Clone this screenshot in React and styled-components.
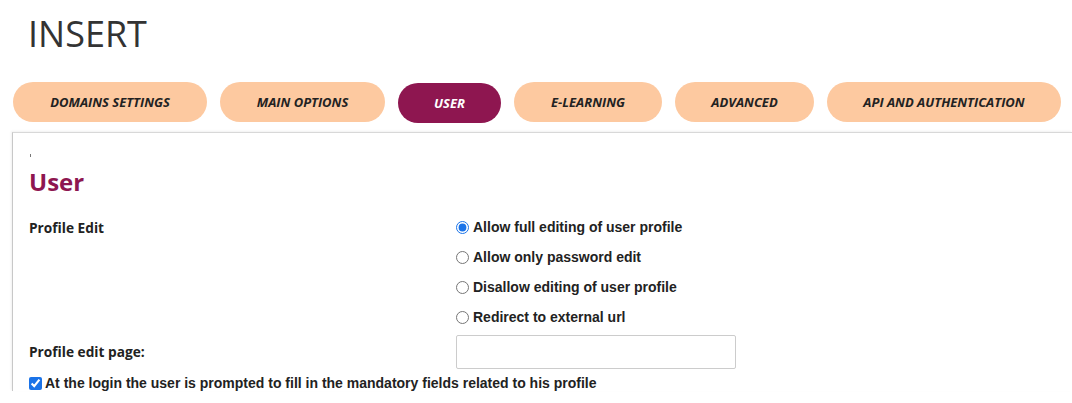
import React from "react";
import styled, { createGlobalStyle } from "styled-components";

const GlobalStyle = createGlobalStyle`
  body {
    margin: 0;
    background: #ffffff;
    font-family: "Open Sans", "Liberation Sans", sans-serif;
  }
`;

const Page = styled.div`
  width: 1072px;
  height: 403px;
  overflow: hidden;
  padding-left: 12px;
  box-sizing: border-box;
`;

const Title = styled.h1`
  margin: 0;
  padding: 12px 0 0 16px;
  height: 82px;
  box-sizing: border-box;
  font-family: "Open Sans", sans-serif;
  font-weight: 400;
  font-size: 36px;
  line-height: 44px;
  color: #333333;
`;

const Tabs = styled.div`
  display: flex;
  gap: 13px;
  padding-left: 1px;
  height: 50px;
`;

const Tab = styled.div`
  width: ${(p) => p.w}px;
  height: 40px;
  margin-top: ${(p) => (p.active ? 1 : 0)}px;
  border-radius: 20px;
  background: ${(p) => (p.active ? "#8e1650" : "#fdc9a0")};
  color: ${(p) => (p.active ? "#ffffff" : "#222222")};
  display: flex;
  align-items: center;
  justify-content: center;
  font-family: "Open Sans", sans-serif;
  font-size: 13px;
  font-weight: 700;
  font-style: italic;
  text-transform: uppercase;
`;

const Panel = styled.div`
  border-top: 1px solid #d8d8d8;
  border-left: 1px solid #c8c8c8;
  box-shadow: -1px -1px 2px rgba(0, 0, 0, 0.06);
  padding: 21px 16px 0 16px;
`;

const Dot = styled.div`
  width: 1px;
  height: 3px;
  margin-left: 1px;
  background: #777777;
`;

const Heading = styled.h2`
  margin: 8px 0 0 0;
  font-family: "Open Sans", sans-serif;
  font-size: 24px;
  font-weight: 700;
  line-height: 34px;
  color: #8e1650;
`;

const FormRow = styled.div`
  display: grid;
  grid-template-columns: 427px 1fr;
  margin-top: ${(p) => p.mt || 0}px;
`;

const Label = styled.div`
  font-family: "Open Sans", sans-serif;
  font-size: 13.7px;
  font-weight: 700;
  color: #222222;
  line-height: 18px;
  padding-top: ${(p) => p.pt || 0}px;
`;

const Options = styled.div`
  display: flex;
  flex-direction: column;
  gap: 12px;
  padding-top: 1px;
`;

const Option = styled.label`
  display: flex;
  align-items: center;
  gap: 4px;
  height: 18px;
  font-family: "Liberation Sans", Arial, sans-serif;
  font-size: 14px;
  font-weight: 700;
  color: #222222;
`;

const Radio = styled.input`
  margin: 0;
  width: 13px;
  height: 13px;
  accent-color: #1a73e8;
`;

const TextInput = styled.input`
  width: 280px;
  height: 34px;
  box-sizing: border-box;
  border: 1px solid #cccccc;
  border-radius: 2px;
  margin: 0;
`;

const CheckRow = styled.label`
  display: flex;
  align-items: center;
  gap: 3px;
  margin-top: 6px;
  font-family: "Liberation Sans", Arial, sans-serif;
  font-size: 14px;
  font-weight: 700;
  color: #222222;
`;

const Check = styled.input`
  margin: 0;
  width: 13px;
  height: 13px;
  accent-color: #1a73e8;
`;

const tabs = [
  { label: "Domains settings", w: 194 },
  { label: "Main options", w: 165 },
  { label: "User", w: 103, active: true },
  { label: "E-learning", w: 148 },
  { label: "Advanced", w: 139 },
  { label: "API and authentication", w: 234 },
];

const options = [
  "Allow full editing of user profile",
  "Allow only password edit",
  "Disallow editing of user profile",
  "Redirect to external url",
];

const App = () => {
  return (
    <>
      <GlobalStyle />
      <Page>
        <Title>INSERT</Title>
        <Tabs>
          {tabs.map((t) => (
            <Tab key={t.label} w={t.w} active={t.active}>
              {t.label}
            </Tab>
          ))}
        </Tabs>
        <Panel>
          <Dot />
          <Heading>User</Heading>
          <FormRow mt={18}>
            <Label pt={2}>Profile Edit</Label>
            <Options>
              {options.map((o, i) => (
                <Option key={o}>
                  <Radio type="radio" name="profile" defaultChecked={i === 0} />
                  {o}
                </Option>
              ))}
            </Options>
          </FormRow>
          <FormRow mt={9}>
            <Label pt={8}>Profile edit page:</Label>
            <TextInput type="text" />
          </FormRow>
          <CheckRow>
            <Check type="checkbox" defaultChecked />
            At the login the user is prompted to fill in the mandatory fields related to his profile
          </CheckRow>
        </Panel>
      </Page>
    </>
  );
};

export default App;
